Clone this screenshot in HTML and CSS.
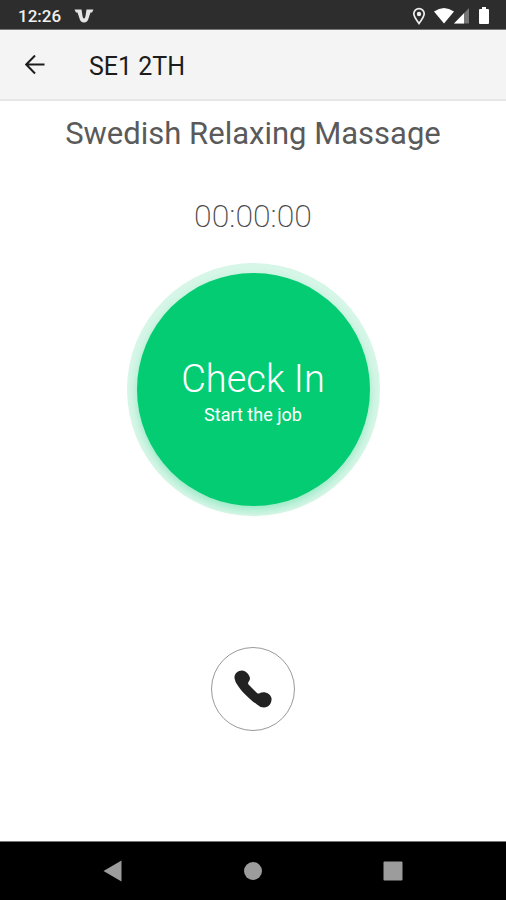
FILE: index.html
```html
<!DOCTYPE html>
<html lang="en">
<head>
<meta charset="utf-8">
<meta name="viewport" content="width=device-width, initial-scale=1">
<title>SE1 2TH</title>
<link rel="stylesheet" href="styles.css">
</head>
<body>
<div class="status">
  <time class="clock">12:26</time>
  <svg class="brand" width="20" height="14" viewBox="0 0 20 14" aria-hidden="true"><path d="M0.500 0.500H7.500L8.500 7Q9 9.500 10 9.500Q11 9.500 11.500 7L12.500 0.500H19.500L18 3.500H16.500L14.500 9.500Q13.500 13.500 10 13.500Q6.500 13.500 5.500 9.500L3.500 3.500H2Z" fill="#e4e4e4"/></svg>
  <div class="signals">
    <svg width="14" height="18" viewBox="0 0 14 18" aria-hidden="true"><path d="M7 16.500C4 12.500 1.800 9.500 1.800 6.800A5.200 5.200 0 0 1 12.200 6.800C12.200 9.500 10 12.500 7 16.500Z" fill="none" stroke="#eee" stroke-width="1.700"/><circle cx="7" cy="7" r="2.200" fill="#eee"/></svg>
    <svg class="wifi" width="20" height="18" viewBox="0 0 20 18" aria-hidden="true"><path d="M0 4.500Q10-2.500 20 4.500L10 16.500Z" fill="#fff"/></svg>
    <svg class="cell" width="16" height="18" viewBox="0 0 16 18" aria-hidden="true"><path d="M15 1V16.500H0Z" fill="#777"/><path d="M10 6.200V16.500H0Z" fill="#fff"/></svg>
    <svg class="battery" width="12" height="18" viewBox="0 0 12 18" aria-hidden="true"><path d="M4 0H8V2H10Q11 2 11 3V16Q11 17 10 17H2Q1 17 1 16V3Q1 2 2 2H4Z" fill="#fff"/></svg>
  </div>
</div>
<header class="bar">
  <button class="back" type="button" aria-label="Back"><svg width="20" height="20" viewBox="0 0 20 20" aria-hidden="true"><path d="M19.500 9.500H1.500M10 0.500L1.200 9.500L10 18.500" fill="none" stroke="#1c1c1c" stroke-width="2"/></svg></button>
  <h1 class="place">SE1 2TH</h1>
</header>
<main class="job">
  <h2 class="service">Swedish Relaxing Massage</h2>
  <time class="timer">00:00:00</time>
  <button class="checkin" type="button"><span class="action">Check In</span><span class="hint">Start the job</span></button>
  <button class="call" type="button" aria-label="Call"><svg width="38" height="38" viewBox="0 0 38 38" aria-hidden="true"><path d="M1 10C-1 5 3 0.500 8 0.500C12 1 15 4 16 8Q16 10.500 14.500 12Q13.500 13.500 15 15L23 23Q24.500 24 26 23C30 21 36 23 37.500 28C38 33 35 37.500 30 37.500Q26 37.500 23 34.500C15 29 7 21 2.500 13.500Q1.500 12 1 10Z" fill="#222"/></svg></button>
</main>
<nav class="nav">
  <button type="button" aria-label="Back"><svg width="20" height="22" viewBox="0 0 20 22" aria-hidden="true"><path d="M0.500 11L18.500 0.500V21.500Z" fill="#9c9c9c"/></svg></button>
  <button type="button" aria-label="Home"><svg width="20" height="22" viewBox="0 0 20 22" aria-hidden="true"><circle cx="10" cy="11" r="9" fill="#9c9c9c"/></svg></button>
  <button type="button" aria-label="Recent apps"><svg width="20" height="22" viewBox="0 0 20 22" aria-hidden="true"><rect x="0.500" y="1.500" width="19" height="19" rx="1" fill="#9c9c9c"/></svg></button>
</nav>
</body>
</html>
```
FILE: styles.css
```css
* {
  box-sizing: border-box;
}

body {
  margin: 0;
  min-height: 100vh;
  display: flex;
  flex-direction: column;
  background: #fff;
  font-family: Roboto, "Liberation Sans", sans-serif;
}

button {
  display: flex;
  align-items: center;
  justify-content: center;
  margin: 0;
  padding: 0;
  border: 0;
  background: none;
  font-family: inherit;
  cursor: pointer;
}

svg {
  display: block;
}

h1,
h2 {
  margin: 0;
}

.status {
  display: flex;
  align-items: center;
  height: 30px;
  padding: 2px 16px 0 18px;
  background: #2d2d2d;
  border-bottom: 1px solid #777;
  color: #f0f0f0;
}

.clock {
  font-size: 17px;
  font-weight: 500;
  line-height: 24px;
}

.brand {
  margin-left: 13px;
}

.signals {
  display: flex;
  align-items: center;
  margin-left: auto;
}

.wifi {
  margin-left: 8px;
}

.battery {
  margin-left: 8px;
}

.bar {
  display: flex;
  align-items: center;
  gap: 44px;
  height: 71px;
  padding: 0 25px;
  background: #f4f4f4;
  border-bottom: 2px solid #e6e6e6;
}

.place {
  padding-top: 4px;
  color: #1c1c1c;
  font-size: 25px;
  font-weight: 400;
  line-height: 32px;
}

.job {
  flex: 1;
  display: flex;
  flex-direction: column;
  align-items: center;
  padding-top: 15px;
}

.service {
  color: #5a5a5a;
  font-size: 31px;
  font-weight: 400;
  line-height: 36px;
}

.timer {
  margin-top: 46px;
  color: #4a4a4a;
  font-size: 32px;
  font-weight: 200;
  line-height: 36px;
}

.checkin {
  flex-direction: column;
  width: 233px;
  height: 233px;
  margin-top: 39px;
  padding-top: 6px;
  border-radius: 50%;
  background: #04cc73;
  box-shadow: 0 4px 8px rgba(4, 204, 115, 0.3), 0 0 0 10px #d6f6e7;
  color: #fff;
}

.action {
  font-size: 38px;
  font-weight: 300;
  line-height: 44px;
}

.hint {
  font-size: 18px;
  font-weight: 400;
  line-height: 28px;
}

.call {
  width: 84px;
  height: 84px;
  margin-top: 141px;
  border: 1px solid #999;
  border-radius: 50%;
}

.nav {
  display: flex;
  align-items: center;
  justify-content: center;
  gap: 120px;
  height: 59px;
  background: #000;
  border-top: 1px solid #777;
}
```
